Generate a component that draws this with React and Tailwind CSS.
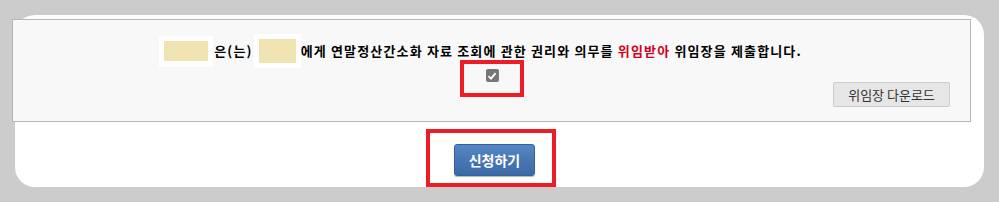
import React from "react";

const Field = ({ outer, inner }) => (
  <span className={`flex items-center justify-center bg-white ${outer}`}>
    <span className={`block bg-[#efe3b2] ${inner}`}></span>
  </span>
);

const App = () => {
  return (
    <div
      className="w-[999px] h-[202px] bg-[#cccccc] pt-[15px] pl-[15px]"
      style={{ fontFamily: '"Noto Sans CJK KR", "Noto Sans", sans-serif' }}
    >
      <div className="w-[969px] h-[172px] bg-white rounded-[20px] pt-[4px] flex flex-col">
        <div className="-ml-[3px] w-[959px] h-[105px] bg-[#f8f8f8] border border-[#b5b5b5] flex flex-col">
          <div className="pt-[14px] flex items-center justify-center pr-[22px] h-[48px]">
            <Field outer="w-[54px] h-[31px]" inner="w-[44px] h-[20px]" />
            <span className="text-[13px] font-bold text-black tracking-[1.2px] px-[1px]">은(는)</span>
            <Field outer="w-[47px] h-[34px]" inner="w-[37px] h-[24px]" />
            <span className="text-[13px] font-bold text-black tracking-[1.15px]">
              에게 연말정산간소화 자료 조회에 관한 권리와 의무를{" "}
              <span className="text-[#d0021b]">위임받아</span> 위임장을
              제출합니다.
            </span>
          </div>
          <div className="-mt-[8px] flex justify-center pl-[1px]">
            <div className="w-[64px] h-[37px] border-4 border-[#ee1c25] flex justify-center pt-[5px]">
              <span className="w-[13px] h-[13px] rounded-[2px] bg-[#777777] flex items-center justify-center">
                <svg width="10" height="10" viewBox="0 0 10 10">
                  <path
                    d="M1.5 5.2 L4 7.6 L8.6 2.2"
                    fill="none"
                    stroke="white"
                    strokeWidth="1.8"
                  />
                </svg>
              </span>
            </div>
          </div>
          <div className="-mt-[15px] flex justify-end pr-[20px]">
            <button className="w-[117px] h-[25px] bg-[#e6e6e6] border border-[#cccccc] rounded-[2px] text-[13px] text-[#333333] leading-none">
              위임장 다운로드
            </button>
          </div>
        </div>
        <div className="mt-[7px] flex justify-center pr-[17px]">
          <div className="w-[130px] h-[58px] border-4 border-[#ee1c25] pl-[24px] pt-[11px]">
            <button className="w-[81px] h-[32px] rounded-[3px] bg-gradient-to-b from-[#5686c4] to-[#3c68a6] border border-[#34609b] text-white font-bold text-[14px] leading-none shadow-[0_1px_1px_rgba(0,0,0,0.3)]">
              신청하기
            </button>
          </div>
        </div>
      </div>
    </div>
  );
};

export default App;
